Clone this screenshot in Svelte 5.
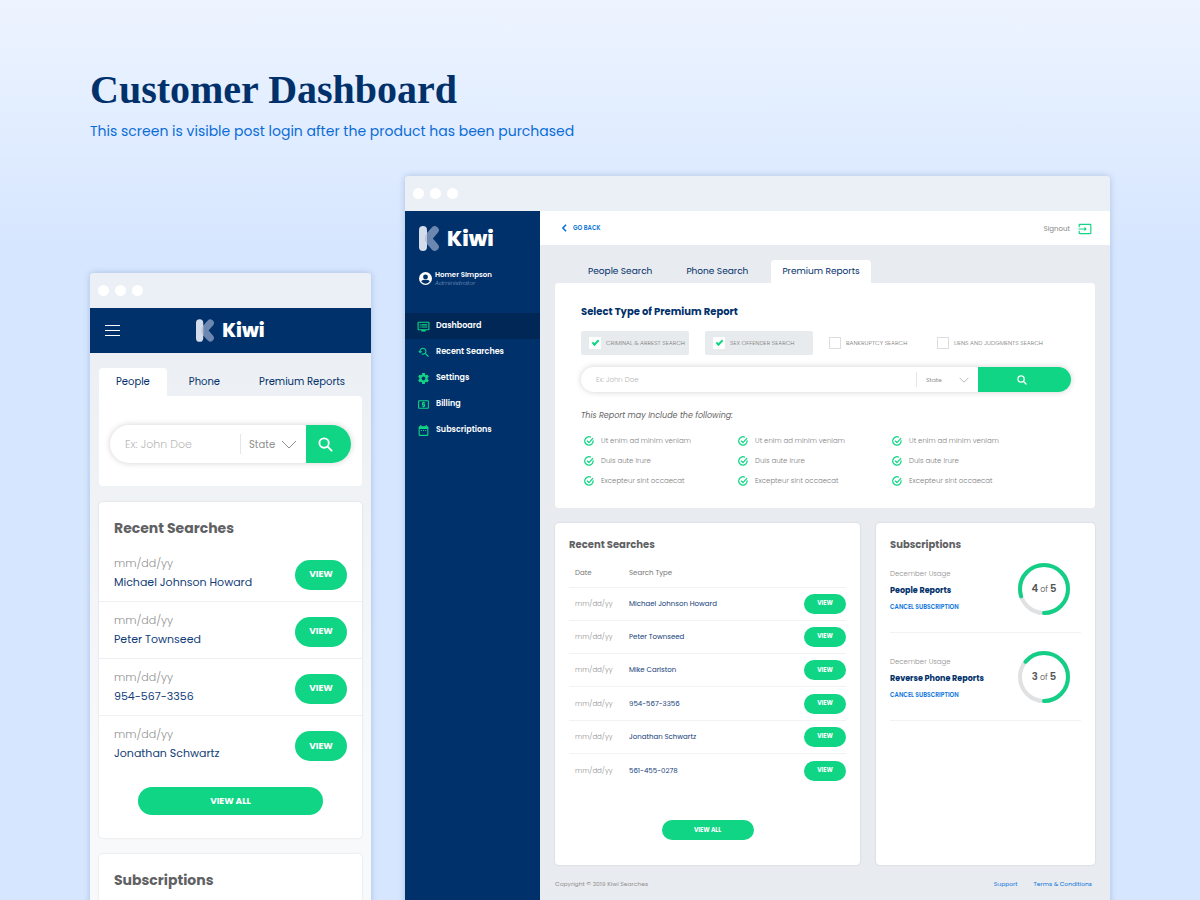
<script lang="ts">
  const icons = {
    dashboard:
      'M21 3H3c-1.1 0-2 .9-2 2v12c0 1.1.9 2 2 2h5v2h8v-2h5c1.1 0 1.99-.9 1.99-2L23 5c0-1.1-.9-2-2-2zm0 14H3V5h18v12zm-2-9H8v2h11V8zm0 4H8v2h11v-2zM7 8H5v2h2V8zm0 4H5v2h2v-2z',
    recent:
      'M17.01 14h-.8l-.27-.27c.98-1.14 1.57-2.61 1.57-4.23 0-3.59-2.91-6.5-6.5-6.5s-6.5 3-6.5 6.5H2l3.84 4 4.16-4H6.51C6.51 7 8.53 5 11.01 5s4.5 2.01 4.5 4.5c0 2.48-2.02 4.5-4.5 4.5-.65 0-1.26-.14-1.82-.38L7.71 15.1c.97.57 2.09.9 3.3.9 1.61 0 3.08-.59 4.22-1.57l.27.27v.79l5.01 4.99L22 19l-4.99-5z',
    settings:
      'M19.43 12.98c.04-.32.07-.64.07-.98s-.03-.66-.07-.98l2.11-1.65c.19-.15.24-.42.12-.64l-2-3.46c-.12-.22-.39-.3-.61-.22l-2.49 1c-.52-.4-1.08-.73-1.69-.98l-.38-2.65C14.46 2.18 14.25 2 14 2h-4c-.25 0-.46.18-.49.42l-.38 2.65c-.61.25-1.17.59-1.69.98l-2.49-1c-.23-.09-.49 0-.61.22l-2 3.46c-.13.22-.07.49.12.64l2.11 1.65c-.04.32-.07.65-.07.98s.03.66.07.98l-2.11 1.65c-.19.15-.24.42-.12.64l2 3.46c.12.22.39.3.61.22l2.49-1c.52.4 1.08.73 1.69.98l.38 2.65c.03.24.24.42.49.42h4c.25 0 .46-.18.49-.42l.38-2.65c.61-.25 1.17-.59 1.69-.98l2.49 1c.23.09.49 0 .61-.22l2-3.46c.12-.22.07-.49-.12-.64l-2.11-1.65zM12 15.5c-1.93 0-3.5-1.57-3.5-3.5s1.57-3.5 3.5-3.5 3.5 1.57 3.5 3.5-1.57 3.5-3.5 3.5z',
    billing:
      'M11 17h2v-1h1c.55 0 1-.45 1-1v-3c0-.55-.45-1-1-1h-3v-1h4V8h-2V7h-2v1h-1c-.55 0-1 .45-1 1v3c0 .55.45 1 1 1h3v1H9v2h2v1zm9-13H4c-1.11 0-1.99.89-1.99 2L2 18c0 1.11.89 2 2 2h16c1.11 0 2-.89 2-2V6c0-1.11-.89-2-2-2zm0 14H4V6h16v12z',
    calendar:
      'M9 11H7v2h2v-2zm4 0h-2v2h2v-2zm4 0h-2v2h2v-2zm2-7h-1V2h-2v2H8V2H6v2H5c-1.11 0-1.99.9-1.99 2L3 20c0 1.1.89 2 2 2h14c1.1 0 2-.9 2-2V6c0-1.1-.9-2-2-2zm0 16H5V9h14v11z',
    signout:
      'M21 3.01H3c-1.1 0-2 .9-2 2V9h2V4.99h18v14.03H3V15H1v4.01c0 1.1.9 1.98 2 1.98h18c1.1 0 2-.88 2-1.98v-14c0-1.11-.9-2-2-2zM11 16l4-4-4-4v3H1v2h10v3z'
  };

  const nav = [
    { label: 'Dashboard', icon: icons.dashboard },
    { label: 'Recent Searches', icon: icons.recent },
    { label: 'Settings', icon: icons.settings },
    { label: 'Billing', icon: icons.billing },
    { label: 'Subscriptions', icon: icons.calendar }
  ];

  const phoneTabs = ['People', 'Phone', 'Premium Reports'];
  const desktopTabs = ['People Search', 'Phone Search', 'Premium Reports'];

  const phoneSearches = ['Michael Johnson Howard', 'Peter Townseed', '954-567-3356', 'Jonathan Schwartz'];
  const desktopSearches = [
    'Michael Johnson Howard',
    'Peter Townseed',
    'Mike Carlston',
    '954-567-3356',
    'Jonathan Schwartz',
    '561-455-0278'
  ];

  const features = ['Ut enim ad minim veniam', 'Duis aute irure', 'Excepteur sint occaecat'];

  const subscriptions = [
    { name: 'People Reports', used: 4, total: 5, arc: 80 },
    { name: 'Reverse Phone Reports', used: 3, total: 5, arc: 64 }
  ];

  let reportTypes = $state([
    { label: 'CRIMINAL & ARREST SEARCH', checked: true },
    { label: 'SEX OFFENDER SEARCH', checked: true },
    { label: 'BANKRUPTCY SEARCH', checked: false },
    { label: 'LIENS AND JUDGMENTS SEARCH', checked: false }
  ]);

  let phoneTab = $state('People');
  let desktopTab = $state('Premium Reports');
  let activeNav = $state('Dashboard');
</script>

{#snippet chrome()}
  <div class="chrome"><i></i><i></i><i></i></div>
{/snippet}

{#snippet logo()}
  <div class="logo">
    <svg viewBox="0 0 20 25" aria-hidden="true">
      <path d="M15.800 4.200 8.500 12.500l7.300 8.300" fill="none" stroke="#6c87b0" stroke-width="8" stroke-linecap="round" stroke-linejoin="round" />
      <rect width="8" height="25" rx="4" fill="#d3dcea" />
      <path d="M8 7v11a9 9 0 0 1 0-11z" fill="#b9c6dc" />
    </svg>
    <span>Kiwi</span>
  </div>
{/snippet}

{#snippet searchBar(id: string)}
  <form class="search" onsubmit={(e) => e.preventDefault()}>
    <input type="text" placeholder="Ex: John Doe" aria-label="Name" id="{id}-name" />
    <div class="state">
      <select aria-label="State" id="{id}-state">
        <option>State</option>
      </select>
      <svg class="chevron" viewBox="0 0 16 9" aria-hidden="true"><path d="M1 1l7 7 7-7" /></svg>
    </div>
    <button type="submit" aria-label="Search">
      <svg viewBox="0 0 16 16" aria-hidden="true"><circle cx="6.500" cy="6.500" r="5" /><path d="M10.500 10.500 14.500 14.500" /></svg>
    </button>
  </form>
{/snippet}

<main>
  <header class="intro">
    <h1>Customer Dashboard</h1>
    <p>This screen is visible post login after the product has been purchased</p>
  </header>

  <div class="devices">
    <section class="window phone">
      {@render chrome()}
      <div class="appbar">
        <button class="menu" aria-label="Menu"><i></i><i></i><i></i></button>
        {@render logo()}
      </div>

      <div class="phone-body">
        <div class="tabs">
          {#each phoneTabs as tab}
            <button class:active={phoneTab === tab} onclick={() => (phoneTab = tab)}>{tab}</button>
          {/each}
        </div>
        <div class="panel">
          {@render searchBar('phone')}
        </div>

        <div class="card recent">
          <h2>Recent Searches</h2>
          <ul>
            {#each phoneSearches as name}
              <li>
                <div>
                  <span class="date">mm/dd/yy</span>
                  <span class="name">{name}</span>
                </div>
                <button class="pill">VIEW</button>
              </li>
            {/each}
          </ul>
          <button class="pill all">VIEW ALL</button>
        </div>

        <div class="card">
          <h2>Subscriptions</h2>
        </div>
      </div>
    </section>

    <section class="window desktop">
      {@render chrome()}
      <div class="app">
        <aside>
          {@render logo()}
          <div class="user">
            <svg viewBox="0 0 24 24" aria-hidden="true">
              <circle cx="12" cy="12" r="12" fill="#fff" />
              <circle cx="12" cy="9" r="4.500" fill="#01316b" />
              <path d="M4 17c3-3.500 13-3.500 16 0-2 3-5 4.500-8 4.500S6 20 4 17z" fill="#01316b" />
            </svg>
            <div>
              <strong>Homer Simpson</strong>
              <em>Administrator</em>
            </div>
          </div>
          <nav>
            {#each nav as item}
              <a
                href="#{item.label}"
                class:active={activeNav === item.label}
                onclick={() => (activeNav = item.label)}
              >
                <svg viewBox="0 0 24 24" aria-hidden="true"><path d={item.icon} /></svg>
                {item.label}
              </a>
            {/each}
          </nav>
        </aside>

        <div class="content">
          <div class="topbar">
            <a class="back" href="#back">
              <svg viewBox="0 0 6 10" aria-hidden="true"><path d="M5 1 1 5l4 4" /></svg>
              GO BACK
            </a>
            <a class="signout" href="#signout">
              Signout
              <svg viewBox="0 0 24 24" aria-hidden="true"><path d={icons.signout} /></svg>
            </a>
          </div>

          <div class="page">
            <div class="tabs">
              {#each desktopTabs as tab}
                <button class:active={desktopTab === tab} onclick={() => (desktopTab = tab)}>{tab}</button>
              {/each}
            </div>

            <div class="panel">
              <h2>Select Type of Premium Report</h2>
              <div class="options">
                {#each reportTypes as type}
                  <label class:checked={type.checked}>
                    <input type="checkbox" bind:checked={type.checked} />
                    {type.label}
                  </label>
                {/each}
              </div>
              {@render searchBar('desktop')}
              <p class="includes">This Report may Include the following:</p>
              <div class="features">
                {#each [1, 2, 3] as column (column)}
                  <ul>
                    {#each features as feature}
                      <li>
                        <svg viewBox="0 0 16 16" aria-hidden="true">
                          <path d="M14.500 7A6.700 6.700 0 1 1 11 2" />
                          <path d="M5 7.500 8 10.500 14.500 3.500" />
                        </svg>
                        {feature}
                      </li>
                    {/each}
                  </ul>
                {/each}
              </div>
            </div>

            <div class="cards">
              <div class="card history">
                <h2>Recent Searches</h2>
                <table>
                  <thead>
                    <tr><th>Date</th><th>Search Type</th><th></th></tr>
                  </thead>
                  <tbody>
                    {#each desktopSearches as name}
                      <tr>
                        <td class="date">mm/dd/yy</td>
                        <td class="name">{name}</td>
                        <td class="action"><button class="pill">VIEW</button></td>
                      </tr>
                    {/each}
                  </tbody>
                </table>
                <button class="pill all">VIEW ALL</button>
              </div>

              <div class="card subs">
                <h2>Subscriptions</h2>
                {#each subscriptions as sub}
                  <div class="sub">
                    <div class="info">
                      <span>December Usage</span>
                      <strong>{sub.name}</strong>
                      <a href="#cancel">CANCEL SUBSCRIPTION</a>
                    </div>
                    <div class="ring">
                      <svg viewBox="0 0 54 54" aria-hidden="true">
                        <circle cx="27" cy="27" r="24" stroke="#dfe1e3" />
                        <!-- the used part starts at the bottom and runs counter-clockwise -->
                        <circle
                          cx="27"
                          cy="27"
                          r="24"
                          stroke="#13cf86"
                          stroke-linecap="round"
                          pathLength="100"
                          stroke-dasharray="{sub.arc} 100"
                          transform="matrix(0 1 1 0 0 0)"
                        />
                      </svg>
                      <p><b>{sub.used}</b> of <b>{sub.total}</b></p>
                    </div>
                  </div>
                {/each}
              </div>
            </div>

            <footer>
              <span>Copyright © 2019 Kiwi Searches</span>
              <a href="#support">Support</a>
              <a href="#terms">Terms &amp; Conditions</a>
            </footer>
          </div>
        </div>
      </div>
    </section>
  </div>
</main>

<style>
  :global(body) {
    margin: 0;
    background: #d6e6ff;
  }

  main {
    --navy: #01316b;
    --green: #10d585;
    --blue: #0b74dc;
    --grey: #909090;
    box-sizing: border-box;
    display: flex;
    flex-direction: column;
    height: 100vh;
    overflow: hidden;
    padding: 68px 90px 0;
    background: linear-gradient(#edf4ff, #d6e6ff 250px);
    font-family: Poppins, Inter, sans-serif;
    color: var(--navy);
  }

  main :global(*) {
    box-sizing: border-box;
  }

  h1,
  h2,
  p,
  ul {
    margin: 0;
    padding: 0;
  }

  ul {
    list-style: none;
  }

  button,
  input,
  select {
    margin: 0;
    padding: 0;
    border: none;
    background: none;
    font-family: inherit;
    outline: none;
  }

  button {
    cursor: pointer;
  }

  a {
    text-decoration: none;
    color: var(--blue);
  }

  svg {
    display: block;
    flex-shrink: 0;
  }

  .intro h1 {
    font-family: 'Liberation Serif', serif;
    font-size: 40px;
    line-height: 44px;
    font-weight: 700;
  }

  .intro p {
    margin-top: 8px;
    font-size: 14px;
    line-height: 22px;
    color: #0a6cd6;
  }

  .devices {
    flex: 1;
    display: grid;
    grid-template-columns: minmax(0, 281fr) minmax(0, 705fr);
    gap: 34px;
    margin-top: 34px;
    min-height: 0;
  }

  .window {
    display: flex;
    flex-direction: column;
    border-radius: 4px 4px 0 0;
    background: #eceff3;
    box-shadow: 0 0 6px rgba(70, 100, 150, 0.3);
  }

  .phone {
    margin-top: 97px;
  }

  .chrome {
    display: flex;
    align-items: center;
    gap: 6px;
    flex-shrink: 0;
    height: 35px;
    padding: 0 8px;
    border-radius: 4px 4px 0 0;
    background: #ebeff6;
  }

  .chrome i {
    width: 11px;
    height: 11px;
    border-radius: 50%;
    background: #fff;
  }

  .logo {
    display: flex;
    align-items: center;
    gap: 8px;
    color: #fff;
    font-weight: 800;
  }

  .logo svg {
    width: 20px;
    height: 25px;
  }

  .tabs {
    display: flex;
  }

  .tabs button {
    color: var(--navy);
    border-radius: 4px 4px 0 0;
  }

  .tabs .active {
    background: #fff;
  }

  .panel,
  .card {
    background: #fff;
    border-radius: 4px;
  }

  .card {
    box-shadow: 0 0 2px rgba(0, 0, 0, 0.15);
  }

  .card h2 {
    color: #606163;
    font-weight: 700;
  }

  .name {
    color: #123d78;
  }

  .date {
    color: var(--grey);
    font-weight: 300;
  }

  .pill {
    border-radius: 16px;
    background: var(--green);
    color: #fff;
    font-weight: 700;
  }

  .search {
    display: flex;
    border-radius: 20px;
    background: #fff;
    box-shadow: 0 0 6px rgba(0, 0, 0, 0.18);
  }

  .search input {
    flex: 1;
    min-width: 0;
    padding-left: 15px;
    font-weight: 300;
  }

  .search input::placeholder {
    color: #b8b8b8;
    opacity: 1;
  }

  .state {
    display: flex;
    align-items: center;
    align-self: center;
    border-left: 1px solid #e6e6e6;
  }

  .state select {
    appearance: none;
    color: var(--grey);
  }

  .chevron {
    fill: none;
    stroke: var(--grey);
    pointer-events: none;
  }

  .search button {
    display: flex;
    align-items: center;
    justify-content: center;
    padding-right: 6px;
    border-radius: 0 20px 20px 0;
    background: var(--green);
  }

  .search button svg {
    fill: none;
    stroke: #fff;
    stroke-width: 2;
    stroke-linecap: round;
  }

  /* phone */

  .appbar {
    display: grid;
    grid-template-columns: 1fr auto 1fr;
    align-items: center;
    flex-shrink: 0;
    height: 45px;
    padding: 0 15px;
    background: var(--navy);
  }

  .menu {
    display: flex;
    flex-direction: column;
    gap: 4px;
    width: 15px;
  }

  .menu i {
    height: 1px;
    background: #fff;
  }

  .appbar .logo {
    font-size: 19px;
    line-height: 24px;
  }

  .appbar .logo svg {
    width: 18px;
    height: 23px;
  }

  .phone-body {
    padding: 15px 9px 0;
    background: linear-gradient(#eceff3, #f7f9fb 400px);
  }

  .phone .tabs {
    justify-content: space-between;
  }

  .phone .tabs button {
    height: 28px;
    padding: 0 17px;
    font-size: 10px;
  }

  .phone .panel {
    padding: 29px 11px 23px;
    border-radius: 0 4px 4px 4px;
  }

  .phone .search {
    height: 38px;
  }

  .phone .search input {
    font-size: 11px;
  }

  .phone .state {
    height: 20px;
    gap: 5px;
    padding: 0 9px 0 8px;
  }

  .phone .state select {
    font-size: 10px;
  }

  .phone .chevron {
    width: 16px;
    height: 9px;
  }

  .phone .search button {
    width: 45px;
  }

  .phone .search button svg {
    width: 15px;
    height: 15px;
  }

  .phone .card {
    margin-top: 16px;
    padding: 14px 0 23px;
  }

  .phone .card h2 {
    padding: 0 15px;
    font-size: 14px;
    line-height: 24px;
  }

  .phone ul {
    margin-top: 5px;
  }

  .phone li {
    display: flex;
    align-items: center;
    justify-content: space-between;
    height: 57px;
    padding: 3px 15px 0;
    border-bottom: 1px solid #eef0f2;
  }

  .phone li:last-child {
    border: none;
  }

  .phone li div {
    padding-bottom: 4px;
  }

  .phone li span {
    display: block;
    font-size: 11px;
    line-height: 19px;
  }

  .phone .pill {
    width: 52px;
    height: 30px;
    font-size: 9px;
  }

  .phone .all {
    display: block;
    width: 70%;
    height: 28px;
    margin: 14px auto 0;
  }

  /* desktop */

  .app {
    flex: 1;
    display: grid;
    grid-template-columns: 135px minmax(0, 1fr);
  }

  aside {
    background: var(--navy);
  }

  aside .logo {
    height: 25px;
    margin: 15px 14px 0;
    font-size: 21px;
  }

  .user {
    display: flex;
    align-items: center;
    gap: 3px;
    margin: 19px 14px 26px;
  }

  .user svg {
    width: 13px;
    height: 13px;
  }

  .user strong,
  .user em {
    display: block;
    font-size: 7px;
    line-height: 9px;
    font-weight: 600;
    color: #fff;
  }

  .user em {
    font-size: 6px;
    line-height: 8px;
    font-weight: 300;
    color: #7d9ac0;
  }

  nav a {
    display: flex;
    align-items: center;
    gap: 6px;
    height: 26px;
    padding-left: 12px;
    font-size: 8px;
    font-weight: 600;
    color: #fff;
  }

  nav a.active {
    background: #012756;
  }

  nav svg {
    width: 13px;
    height: 13px;
    fill: var(--green);
  }

  .content {
    background: #e8ebef;
  }

  .topbar {
    display: flex;
    align-items: center;
    justify-content: space-between;
    height: 34px;
    padding: 0 18px 0 22px;
    background: #fff;
  }

  .back {
    display: flex;
    align-items: center;
    gap: 6px;
    font-size: 6px;
    font-weight: 600;
  }

  .back svg {
    width: 5px;
    height: 8px;
    fill: none;
    stroke: var(--blue);
    stroke-width: 2;
  }

  .signout {
    display: flex;
    align-items: center;
    gap: 8px;
    padding-top: 2px;
    font-size: 7px;
    color: #888;
  }

  .signout svg {
    width: 14px;
    height: 14px;
    fill: var(--green);
  }

  .page {
    padding: 15px 15px 0;
  }

  .desktop .tabs {
    gap: 12px;
    padding-left: 22px;
  }

  .desktop .tabs button {
    height: 23px;
    padding: 0 11px;
    font-size: 9px;
  }

  .desktop .panel {
    padding: 21px 24px 17px 26px;
  }

  .panel h2 {
    font-size: 10px;
    line-height: 16px;
    font-weight: 700;
  }

  .options {
    display: grid;
    grid-template-columns: 108px 108px 92px 1fr;
    gap: 16px;
    margin: 11px 0 12px;
  }

  .options label {
    display: flex;
    align-items: center;
    gap: 5px;
    height: 24px;
    font-size: 6px;
    font-weight: 300;
    color: #777;
    white-space: nowrap;
  }

  .options label.checked {
    padding-left: 8px;
    border-radius: 2px;
    background: #e8ebee;
  }

  .options input {
    appearance: none;
    display: grid;
    place-content: center;
    width: 12px;
    height: 12px;
    border: 1px solid #ddd;
    background: #fff;
  }

  .options input:checked {
    border-color: #fff;
  }

  .options input:checked::before {
    content: '';
    box-sizing: border-box;
    width: 7px;
    height: 4px;
    margin-bottom: 2px;
    border-left: 2px solid var(--green);
    border-bottom: 2px solid var(--green);
    rotate: -45deg;
  }

  .desktop .search {
    height: 25px;
  }

  .desktop .search input {
    font-size: 7px;
  }

  .desktop .state {
    width: 62px;
    height: 15px;
    padding: 0 9px;
    justify-content: space-between;
  }

  .desktop .state select {
    font-size: 6px;
  }

  .desktop .chevron {
    width: 10px;
    height: 6px;
  }

  .desktop .search button {
    width: 93px;
  }

  .desktop .search button svg {
    width: 10px;
    height: 10px;
  }

  .includes {
    margin: 17px 0 8px;
    font-size: 8px;
    line-height: 14px;
    font-style: italic;
    color: #666;
  }

  .features {
    display: grid;
    grid-template-columns: 154px 154px 1fr;
    padding-left: 3px;
  }

  .features li {
    display: flex;
    align-items: center;
    gap: 7px;
    height: 20px;
    font-size: 7px;
    font-weight: 300;
    color: #808080;
  }

  .features svg {
    width: 10px;
    height: 10px;
    fill: none;
    stroke: var(--green);
    stroke-width: 2;
  }

  .cards {
    display: grid;
    grid-template-columns: 305fr 219fr;
    gap: 16px;
    margin-top: 15px;
  }

  .desktop .card {
    padding: 14px 14px 25px;
  }

  .desktop .card h2 {
    font-size: 10px;
    line-height: 16px;
  }

  table {
    width: 100%;
    height: 228px;
    margin-top: 6px;
    border-collapse: collapse;
    font-size: 7px;
  }

  th {
    height: 28px;
    padding: 0;
    text-align: left;
    font-weight: 400;
    color: #777;
  }

  th:first-child,
  td:first-child {
    width: 60px;
    padding-left: 6px;
  }

  td {
    height: 33px;
    padding: 0;
    border-top: 1px solid #f1f2f4;
  }

  .action {
    text-align: right;
  }

  .desktop .pill {
    width: 42px;
    height: 20px;
    font-size: 6px;
  }

  .desktop .all {
    display: block;
    width: 92px;
    margin: 33px auto 0;
  }

  .sub {
    display: flex;
    align-items: center;
    justify-content: space-between;
    padding: 9px 10px 16px 0;
    border-bottom: 1px solid #f1f2f4;
  }

  .sub + .sub {
    padding-top: 17px;
  }

  .info {
    display: flex;
    flex-direction: column;
    padding-top: 3px;
    font-size: 7px;
    line-height: 17px;
  }

  .info span {
    font-weight: 300;
    color: var(--grey);
  }

  .info strong {
    font-size: 8px;
    font-weight: 700;
  }

  .info a {
    font-size: 6px;
    font-weight: 600;
  }

  .ring {
    display: grid;
    place-items: center;
    width: 54px;
    height: 54px;
  }

  .ring > * {
    grid-area: 1 / 1;
  }

  .ring circle {
    fill: none;
    stroke-width: 4;
  }

  .ring p {
    font-size: 8px;
    color: #777;
  }

  .ring b {
    font-size: 10px;
    font-weight: 600;
    color: #555;
  }

  footer {
    display: flex;
    gap: 16px;
    padding: 12px 3px 12px 0;
    font-size: 6px;
    line-height: 14px;
    color: var(--grey);
  }

  footer span {
    flex: 1;
  }
</style>
